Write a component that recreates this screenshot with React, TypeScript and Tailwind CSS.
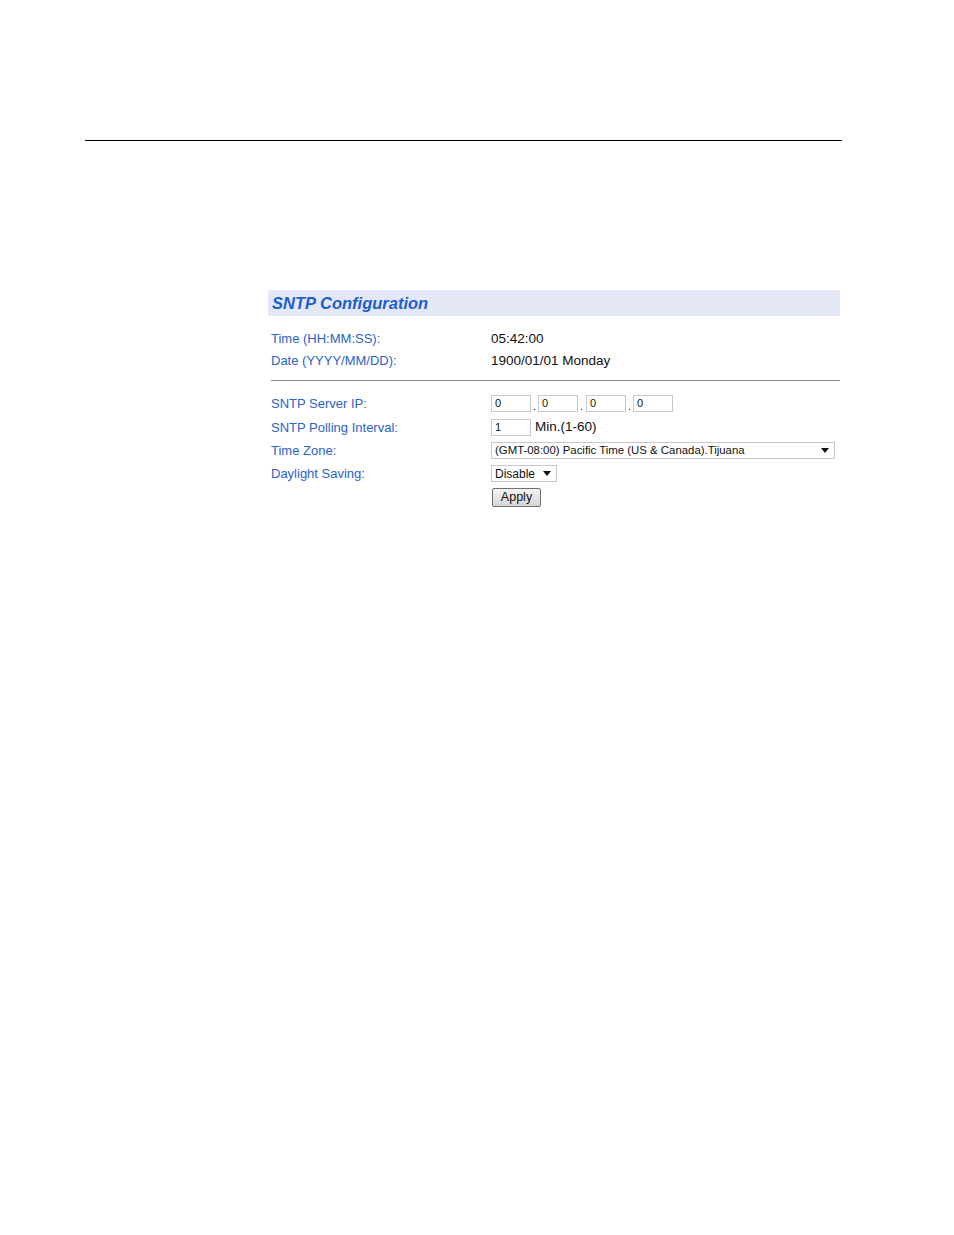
import React from "react";

const font = { fontFamily: '"Liberation Sans", Arial, sans-serif' };

function Caret() {
  return (
    <svg width="8" height="5" viewBox="0 0 8 5" className="shrink-0">
      <path d="M0 0 H8 L4 5 Z" fill="#111" />
    </svg>
  );
}

function IpBox() {
  return (
    <div className="w-[40px] h-[17px] border border-[#c8c8c8] bg-white text-[11px] leading-[15px] pl-[3px] text-[#111]">0</div>
  );
}

export default function App() {
  return (
    <div className="w-[954px] h-[1235px] bg-white" style={font}>
      <div className="pt-[140px] pl-[85px]">
        <div className="w-[757px] h-px bg-black" />
      </div>

      <div className="ml-[268px] mt-[149px] w-[572px]">
        {/* header */}
        <div className="h-[26px] bg-[#e3e7f6] flex items-center pl-[4px] pt-[1px]">
          <span className="text-[16.5px] font-bold italic text-[#1c5fcf]">SNTP Configuration</span>
        </div>

        {/* time / date */}
        <div className="pl-[3px] pt-[12px] text-[13px]">
          <div className="flex items-center h-[22px]">
            <div className="w-[220px] text-[#2a63c8]">Time (HH:MM:SS):</div>
            <div className="text-[#111] text-[13.5px]">05:42:00</div>
          </div>
          <div className="flex items-center h-[22px]">
            <div className="w-[220px] text-[#2a63c8]">Date (YYYY/MM/DD):</div>
            <div className="text-[#111] text-[13.5px]">1900/01/01 Monday</div>
          </div>
        </div>

        <div className="ml-[3px] mt-[8px] h-px bg-[#8a8a8a]" />

        {/* settings */}
        <div className="pl-[3px] pt-[14px] text-[13px]">
          <div className="flex items-center h-[17px]">
            <div className="w-[220px] text-[#2a63c8]">SNTP Server IP:</div>
            <div className="flex items-end text-[#111]">
              <IpBox />
              <span className="w-[7px] text-[11px] leading-[12px] pl-[2px]">.</span>
              <IpBox />
              <span className="w-[8px] text-[11px] leading-[12px] pl-[2px]">.</span>
              <IpBox />
              <span className="w-[7px] text-[11px] leading-[12px] pl-[2px]">.</span>
              <IpBox />
            </div>
          </div>

          <div className="flex items-center h-[17px] mt-[7px]">
            <div className="w-[220px] text-[#2a63c8]">SNTP Polling Interval:</div>
            <div className="flex items-center text-[#111]">
              <div className="w-[40px] h-[17px] border border-[#c8c8c8] text-[11px] leading-[15px] pl-[3px]">1</div>
              <span className="ml-[4px] text-[13.5px]">Min.(1-60)</span>
            </div>
          </div>

          <div className="flex items-center h-[17px] mt-[6px]">
            <div className="w-[220px] text-[#2a63c8]">Time Zone:</div>
            <div className="w-[344px] h-[17px] border border-[#c8c8c8] flex items-center justify-between pl-[3px] pr-[5px] text-[11.4px] text-[#111]">
              <span>(GMT-08:00) Pacific Time (US &amp; Canada).Tijuana</span>
              <Caret />
            </div>
          </div>

          <div className="flex items-center h-[17px] mt-[6px]">
            <div className="w-[220px] text-[#2a63c8]">Daylight Saving:</div>
            <div className="w-[66px] h-[17px] border border-[#c8c8c8] flex items-center justify-between pl-[3px] pr-[5px] text-[12px] text-[#111]">
              <span>Disable</span>
              <Caret />
            </div>
          </div>

          <div className="flex items-center mt-[6px]">
            <div className="w-[220px]" />
            <button className="ml-[1px] w-[49px] h-[19px] border border-[#707070] rounded-[2px] bg-gradient-to-b from-[#f4f4f4] to-[#d6d6d6] text-[12.5px] leading-[15px] text-[#111]">
              Apply
            </button>
          </div>
        </div>
      </div>
    </div>
  );
}
